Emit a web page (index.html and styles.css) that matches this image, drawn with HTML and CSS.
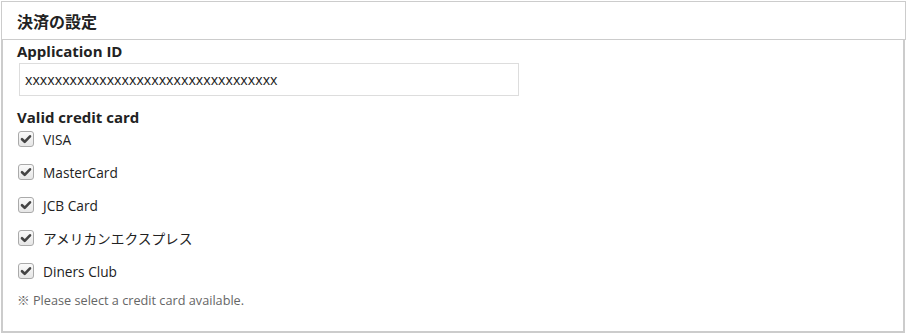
FILE: index.html
```html
<!DOCTYPE html>
<html lang="ja">
<head>
<meta charset="utf-8">
<title>決済の設定</title>
<link rel="stylesheet" href="styles.css">
</head>
<body>
<div class="panel">
  <div class="panel-head">決済の設定</div>
  <div class="panel-body">
    <div class="field-label">Application ID</div>
    <div class="input">xxxxxxxxxxxxxxxxxxxxxxxxxxxxxxxxxx</div>
    <div class="field-label second">Valid credit card</div>
    <ul class="cards">
      <li class="card"><span class="cb"><svg viewBox="0 0 16 16" width="16" height="16"><path d="M4 8.2 L6.7 10.8 L12 5.3" fill="none" stroke="#444" stroke-width="2.6" stroke-linecap="round" stroke-linejoin="round"/></svg></span>VISA</li>
      <li class="card"><span class="cb"><svg viewBox="0 0 16 16" width="16" height="16"><path d="M4 8.2 L6.7 10.8 L12 5.3" fill="none" stroke="#444" stroke-width="2.6" stroke-linecap="round" stroke-linejoin="round"/></svg></span>MasterCard</li>
      <li class="card"><span class="cb"><svg viewBox="0 0 16 16" width="16" height="16"><path d="M4 8.2 L6.7 10.8 L12 5.3" fill="none" stroke="#444" stroke-width="2.6" stroke-linecap="round" stroke-linejoin="round"/></svg></span>JCB Card</li>
      <li class="card"><span class="cb"><svg viewBox="0 0 16 16" width="16" height="16"><path d="M4 8.2 L6.7 10.8 L12 5.3" fill="none" stroke="#444" stroke-width="2.6" stroke-linecap="round" stroke-linejoin="round"/></svg></span>アメリカンエクスプレス</li>
      <li class="card"><span class="cb"><svg viewBox="0 0 16 16" width="16" height="16"><path d="M4 8.2 L6.7 10.8 L12 5.3" fill="none" stroke="#444" stroke-width="2.6" stroke-linecap="round" stroke-linejoin="round"/></svg></span>Diners Club</li>
    </ul>
    <p class="note">※ Please select a credit card available.</p>
  </div>
</div>
</body>
</html>
```
FILE: styles.css
```css
html, body {
  margin: 0;
  padding: 0;
  background: #fff;
}
body {
  font-family: "Open Sans", "Noto Sans CJK JP", sans-serif;
  color: #222;
}
.panel {
  margin: 1px 1px 0 1px;
  width: 905px;
}
.panel-head {
  box-sizing: border-box;
  height: 39px;
  border: 1px solid #ccc;
  padding: 0 15px;
  display: flex;
  align-items: center;
  font-size: 16px;
  font-weight: 700;
  color: #222;
}
.panel-body {
  box-sizing: border-box;
  width: 904px;
  height: 293px;
  border-left: 2px solid #ccc;
  border-right: 2px solid #ccc;
  border-bottom: 2px solid #ccc;
  padding: 1px 16px 0 14px;
}
.field-label {
  font-size: 15px;
  font-weight: 700;
  line-height: 20px;
  color: #222;
}
.field-label.second {
  margin-top: 11px;
}
.input {
  box-sizing: border-box;
  margin: 2px 0 0 2px;
  width: 500px;
  height: 33px;
  border: 1px solid #ddd;
  padding: 0 5px;
  display: flex;
  align-items: center;
  font-size: 14.2px;
  color: #222;
}
.cards {
  list-style: none;
  margin: 2px 0 0 0;
  padding: 0;
  display: flex;
  flex-direction: column;
  gap: 13px;
}
.card {
  display: flex;
  align-items: center;
  height: 20px;
  font-size: 13.7px;
  color: #222;
}
.cb {
  box-sizing: border-box;
  width: 16px;
  height: 16px;
  margin: 0 9px 0 1px;
  border: 1px solid #aaa;
  border-radius: 3px;
  background: linear-gradient(#fafafa, #e6e6e6);
  display: flex;
  align-items: center;
  justify-content: center;
  overflow: hidden;
}
.cb svg {
  display: block;
  flex: none;
}
.note {
  margin: 9px 0 0 0;
  font-size: 12.7px;
  line-height: 20px;
  color: #666;
}
```
